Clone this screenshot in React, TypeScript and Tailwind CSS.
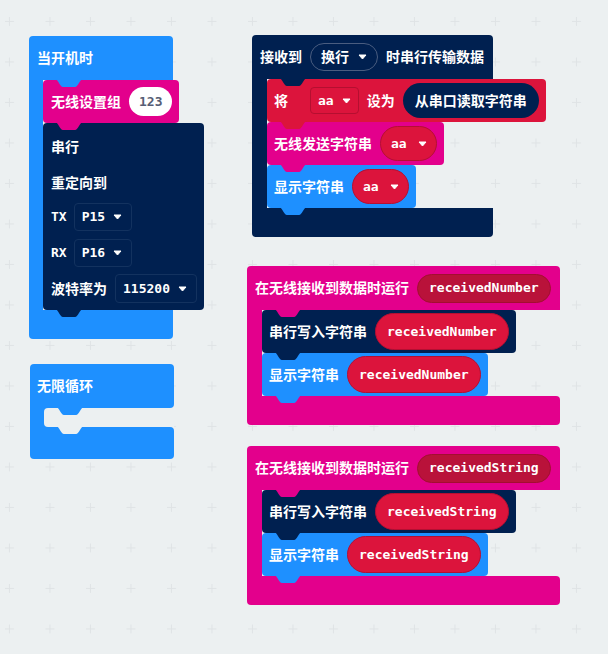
import type { ReactNode } from "react";

// connector tab that hangs under a block into the next one
function Tab({ fill, x }: { fill: string; x: string }) {
  return (
    <svg className={`absolute top-full -mt-px z-10 ${x}`} width="28" height="8" viewBox="0 0 28 8">
      <path d="M0 0C3 0 5 8 8 8H20C23 8 25 0 28 0Z" fill={fill} />
    </svg>
  );
}

function Arrow() {
  return (
    <svg width="9" height="6" viewBox="0 0 9 6" className="shrink-0">
      <path d="M1 1h7L4.5 5z" fill="#fff" stroke="#fff" strokeWidth="1" strokeLinejoin="round" />
    </svg>
  );
}

const Mono = ({ children }: { children: ReactNode }) => <span className="text-[13px]">{children}</span>;

function Grid() {
  return (
    <svg className="absolute inset-0" width="608" height="654">
      <defs>
        <pattern id="ws-grid" x="5" y="17" width="40.5" height="40.5" patternUnits="userSpaceOnUse">
          <path d="M0 4.5h9M4.5 0v9" stroke="#dfe3e5" strokeWidth="1" />
        </pattern>
      </defs>
      <rect width="608" height="654" fill="url(#ws-grid)" />
    </svg>
  );
}

function Stmt({ bg, tab, children }: { bg: string; tab: string; children: ReactNode }) {
  return (
    <div className={`relative flex h-[43px] items-center gap-2 rounded-[4px] px-[7px] ${bg}`}>
      {children}
      <Tab fill={tab} x="left-[12px]" />
    </div>
  );
}

function NavyDrop({ children }: { children: ReactNode }) {
  return (
    <div className="flex h-full items-center gap-2 rounded-[4px] border border-[#13325f] pl-[7px] pr-[9px]">
      <Mono>{children}</Mono>
      <Arrow />
    </div>
  );
}

function AaPill() {
  return (
    <div className="flex h-[35px] items-center gap-[11px] rounded-full border border-[#b50f32] bg-[#dc143c] pl-[10px] pr-[9px]">
      <Mono>aa</Mono>
      <Arrow />
    </div>
  );
}

function ValuePill({ children }: { children: ReactNode }) {
  return (
    <div className="flex h-[37px] items-center rounded-full border border-[#b50f32] bg-[#dc143c] px-[11px]">
      <Mono>{children}</Mono>
    </div>
  );
}

function ParamPill({ children }: { children: ReactNode }) {
  return (
    <div className="flex h-[29px] items-center rounded-full border border-[#a30e31] bg-[#b9123a] px-[11px]">
      <Mono>{children}</Mono>
    </div>
  );
}

export default function App() {
  return (
    <div className="relative h-[654px] w-[608px] overflow-hidden bg-[#ecf0f1] font-['DejaVu_Sans_Mono','Noto_Sans_CJK_SC',monospace] text-[14px] font-bold leading-[20px] text-white">
      <Grid />

      {/* on start */}
      <div className="absolute left-[29px] top-[36px] flex flex-col items-start">
        <div className="relative flex h-[44px] w-[144px] items-center rounded-t-[4px] bg-[#1e90ff] pl-2">
          当开机时
          <Tab fill="#1e90ff" x="left-[26px]" />
        </div>
        <div className="flex">
          <div className="w-[14px] bg-[#1e90ff]" />
          <div className="flex flex-col items-start">
            <Stmt bg="bg-[#e3008c]" tab="#e3008c">
              <span className="pl-px">无线设置组</span>
              <span className="flex h-[29px] items-center rounded-full bg-white px-[10px] text-[#575e75]">
                <Mono>123</Mono>
              </span>
            </Stmt>
            <div className="relative flex flex-col rounded-[4px] bg-[#002050] pl-2 pr-[7px]">
              <div className="flex h-[48px] items-center">串行</div>
              <div className="flex h-[24px] items-center">重定向到</div>
              <div className="mt-2 flex h-[28px] items-center gap-[7px]">
                <Mono>TX</Mono>
                <NavyDrop>P15</NavyDrop>
              </div>
              <div className="mt-2 flex h-[28px] items-center gap-[7px]">
                <Mono>RX</Mono>
                <NavyDrop>P16</NavyDrop>
              </div>
              <div className="my-[7px] flex h-[29px] items-center gap-2">
                波特率为
                <NavyDrop>115200</NavyDrop>
              </div>
              <Tab fill="#002050" x="left-[12px]" />
            </div>
          </div>
        </div>
        <div className="h-[29px] w-[144px] rounded-b-[4px] bg-[#1e90ff]" />
      </div>

      {/* forever */}
      <div className="absolute left-[30px] top-[364px] flex flex-col items-start">
        <div className="relative flex h-[44px] w-[144px] items-center rounded-t-[4px] rounded-br-[4px] bg-[#1e90ff] pl-[7px]">
          无限循环
          <Tab fill="#1e90ff" x="left-[26px]" />
        </div>
        <div className="flex h-[19px] w-[144px] bg-[#1e90ff]">
          <div className="w-[14px]" />
          <div className="relative flex-1 rounded-l-[4px] bg-[#ecf0f1]">
            <Tab fill="#ecf0f1" x="left-[12px]" />
          </div>
        </div>
        <div className="h-[32px] w-[144px] rounded-b-[4px] rounded-tr-[4px] bg-[#1e90ff]" />
      </div>

      {/* serial data received */}
      <div className="absolute left-[252px] top-[35px] flex flex-col items-start">
        <div className="relative flex h-[44px] w-[241px] items-center gap-2 rounded-t-[4px] bg-[#002050] pl-2">
          接收到
          <div className="flex h-[28px] items-center gap-[9px] rounded-full border border-[#4a5d80] pl-[10px] pr-[10px]">
            换行
            <Arrow />
          </div>
          时串行传输数据
          <Tab fill="#002050" x="left-[27px]" />
        </div>
        <div className="flex">
          <div className="w-[15px] bg-[#002050]" />
          <div className="flex flex-col items-start">
            <Stmt bg="bg-[#dc143c]" tab="#dc143c">
              将
              <div className="ml-[14px] flex h-[27px] items-center gap-2 rounded-[4px] border border-[#b50f30] pl-[7px] pr-[7px]">
                <Mono>aa</Mono>
                <Arrow />
              </div>
              设为
              <div className="flex h-[35px] items-center rounded-full bg-[#002050] px-3">从串口读取字符串</div>
            </Stmt>
            <Stmt bg="bg-[#e3008c]" tab="#e3008c">
              无线发送字符串
              <AaPill />
            </Stmt>
            <Stmt bg="bg-[#1e90ff]" tab="#1e90ff">
              显示字符串
              <AaPill />
            </Stmt>
          </div>
        </div>
        <div className="h-[29px] w-[241px] rounded-b-[4px] bg-[#002050]" />
      </div>

      {/* radio received number */}
      <div className="absolute left-[247px] top-[266px] flex flex-col items-start">
        <div className="relative flex h-[44px] w-[313px] items-center gap-2 rounded-t-[4px] bg-[#e3008c] pl-2">
          在无线接收到数据时运行
          <ParamPill>receivedNumber</ParamPill>
          <Tab fill="#e3008c" x="left-[27px]" />
        </div>
        <div className="flex">
          <div className="w-[15px] bg-[#e3008c]" />
          <div className="flex flex-col items-start">
            <Stmt bg="bg-[#002050]" tab="#002050">
              串行写入字符串
              <ValuePill>receivedNumber</ValuePill>
            </Stmt>
            <Stmt bg="bg-[#1e90ff]" tab="#1e90ff">
              显示字符串
              <ValuePill>receivedNumber</ValuePill>
            </Stmt>
          </div>
        </div>
        <div className="h-[29px] w-[313px] rounded-b-[4px] rounded-tr-[4px] bg-[#e3008c]" />
      </div>

      {/* radio received string */}
      <div className="absolute left-[247px] top-[446px] flex flex-col items-start">
        <div className="relative flex h-[44px] w-[313px] items-center gap-2 rounded-t-[4px] bg-[#e3008c] pl-2">
          在无线接收到数据时运行
          <ParamPill>receivedString</ParamPill>
          <Tab fill="#e3008c" x="left-[27px]" />
        </div>
        <div className="flex">
          <div className="w-[15px] bg-[#e3008c]" />
          <div className="flex flex-col items-start">
            <Stmt bg="bg-[#002050]" tab="#002050">
              串行写入字符串
              <ValuePill>receivedString</ValuePill>
            </Stmt>
            <Stmt bg="bg-[#1e90ff]" tab="#1e90ff">
              显示字符串
              <ValuePill>receivedString</ValuePill>
            </Stmt>
          </div>
        </div>
        <div className="h-[29px] w-[313px] rounded-b-[4px] rounded-tr-[4px] bg-[#e3008c]" />
      </div>
    </div>
  );
}
